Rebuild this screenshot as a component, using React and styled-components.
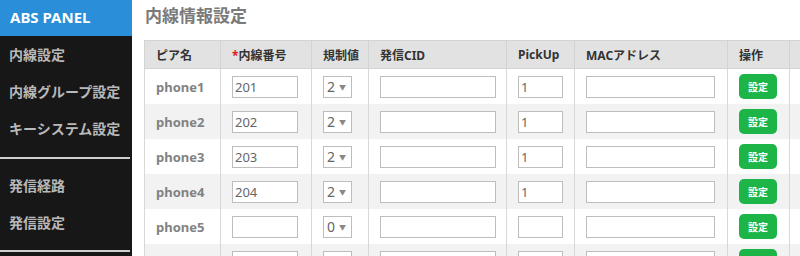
import React from "react";
import styled, { createGlobalStyle } from "styled-components";

const GlobalStyle = createGlobalStyle`
  html, body {
    margin: 0;
    padding: 0;
    background: #fff;
    font-family: "Noto Sans", "Noto Sans CJK JP", sans-serif;
  }
`;

const Page = styled.div`
  display: flex;
  width: 800px;
  height: 256px;
  overflow: hidden;
`;

const Sidebar = styled.nav`
  width: 132px;
  flex-shrink: 0;
  background: #171717;
  display: flex;
  flex-direction: column;
`;

const Brand = styled.div`
  height: 36px;
  background: #2a8ed8;
  color: #fff;
  font-weight: 700;
  font-size: 15px;
  line-height: 34px;
  padding-left: 10px;
`;

const NavItem = styled.div`
  height: 37px;
  line-height: 37px;
  padding-left: 9px;
  color: #b9b9b9;
  font-weight: 700;
  font-size: 14px;
`;

const NavGroup = styled.div`
  padding: 0 0 10px;
  border-bottom: 2px solid #cfcfcf;
  margin-right: 2px;
`;

const NavGroupSecond = styled(NavGroup)`
  padding: 8px 0 9px;
`;

const Main = styled.main`
  flex: 1;
  padding-left: 12px;
  overflow: hidden;
`;

const Title = styled.h1`
  margin: 0;
  height: 40px;
  line-height: 32px;
  padding-left: 1px;
  font-size: 17px;
  font-weight: 700;
  color: #7a7a7a;
`;

const Table = styled.table`
  border-collapse: collapse;
  table-layout: fixed;
  width: 760px;
`;

const Th = styled.th`
  box-sizing: border-box;
  width: ${(p) => p.w}px;
  height: 28px;
  padding: 0 0 0 11px;
  text-align: left;
  background: #e2e2e2;
  border: 1px solid #d3d3d3;
  color: #333;
  font-size: 12px;
  font-weight: 700;
  white-space: nowrap;
`;

const Req = styled.span`
  color: #e02020;
`;

const Tr = styled.tr`
  background: ${(p) => (p.odd ? "#f2f2f2" : "#fff")};
`;

const Td = styled.td`
  height: 35px;
  padding: 0 0 0 11px;
  border-left: 1px solid #d8d8d8;
  border-right: 1px solid #d8d8d8;
  font-size: 13px;
  font-weight: 700;
  color: #828282;
  white-space: nowrap;
`;

const Input = styled.input`
  box-sizing: border-box;
  width: ${(p) => p.w}px;
  height: 22px;
  border: 1px solid #bdbdbd;
  padding: 0 2px;
  font-family: inherit;
  font-size: 13px;
  color: #666;
  background: #fff;
  display: block;
`;

const SelectBox = styled.div`
  box-sizing: border-box;
  width: 29px;
  height: 22px;
  border: 1px solid #bdbdbd;
  background: #fff;
  display: flex;
  align-items: center;
  padding-left: 3px;
  gap: 4px;
  font-size: 14px;
  font-weight: 400;
  color: #666;
`;

const Caret = styled.span`
  font-size: 7px;
  color: #888;
`;

const Button = styled.button`
  width: 38px;
  height: 25px;
  border: none;
  border-radius: 5px;
  background: #1db548;
  color: #fff;
  font-family: inherit;
  font-size: 10px;
  font-weight: 700;
  padding: 0;
  display: block;
`;

const rows = [
  { name: "phone1", ext: "201", limit: "2", pick: "1" },
  { name: "phone2", ext: "202", limit: "2", pick: "1" },
  { name: "phone3", ext: "203", limit: "2", pick: "1" },
  { name: "phone4", ext: "204", limit: "2", pick: "1" },
  { name: "phone5", ext: "", limit: "0", pick: "" },
  { name: "phone6", ext: "", limit: "0", pick: "" },
];

export default function App() {
  return (
    <Page>
      <GlobalStyle />
      <Sidebar>
        <Brand>ABS PANEL</Brand>
        <NavGroup>
          <NavItem>内線設定</NavItem>
          <NavItem>内線グループ設定</NavItem>
          <NavItem>キーシステム設定</NavItem>
        </NavGroup>
        <NavGroupSecond>
          <NavItem>発信経路</NavItem>
          <NavItem>発信設定</NavItem>
        </NavGroupSecond>
      </Sidebar>
      <Main>
        <Title>内線情報設定</Title>
        <Table>
          <thead>
            <tr>
              <Th w={76}>ピア名</Th>
              <Th w={91}>
                <Req>*</Req>内線番号
              </Th>
              <Th w={57}>規制値</Th>
              <Th w={138}>発信CID</Th>
              <Th w={68}>PickUp</Th>
              <Th w={153}>MACアドレス</Th>
              <Th w={62}>操作</Th>
              <Th w={115}></Th>
            </tr>
          </thead>
          <tbody>
            {rows.map((r, i) => (
              <Tr key={r.name} odd={i % 2 === 1}>
                <Td>{r.name}</Td>
                <Td>
                  <Input w={66} defaultValue={r.ext} />
                </Td>
                <Td>
                  <SelectBox>
                    {r.limit}
                    <Caret>▼</Caret>
                  </SelectBox>
                </Td>
                <Td>
                  <Input w={116} defaultValue="" />
                </Td>
                <Td>
                  <Input w={45} defaultValue={r.pick} />
                </Td>
                <Td>
                  <Input w={129} defaultValue="" />
                </Td>
                <Td>
                  <Button>設定</Button>
                </Td>
                <Td></Td>
              </Tr>
            ))}
          </tbody>
        </Table>
      </Main>
    </Page>
  );
}
